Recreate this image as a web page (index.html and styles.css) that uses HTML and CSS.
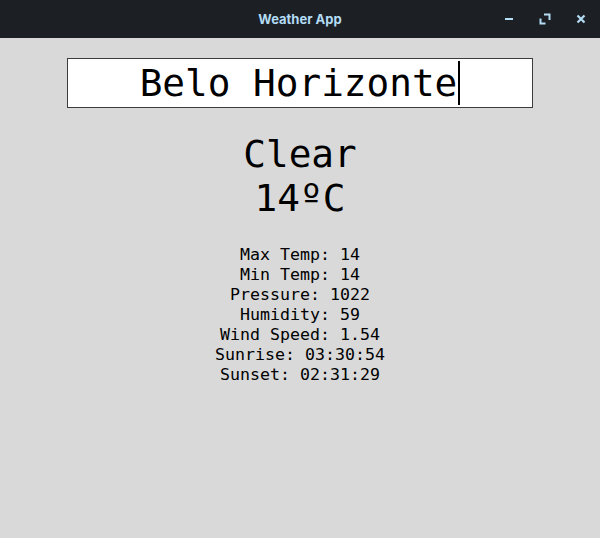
FILE: index.html
```html
<!DOCTYPE html>
<html>
<head>
<meta charset="utf-8">
<title>Weather App</title>
<link rel="stylesheet" href="styles.css">
</head>
<body>
<div class="window">
  <header class="titlebar">
    <div class="spacer"></div>
    <div class="title">Weather App</div>
    <div class="controls">
      <span class="ctl"><svg width="24" height="24" viewBox="0 0 24 24"><rect x="8" y="11" width="8" height="2" fill="#b3dcf5"/></svg></span>
      <span class="ctl"><svg width="24" height="24" viewBox="0 0 24 24"><path d="M11 7.5h5.5v5.5M7.5 11.5v5h5" fill="none" stroke="#b3dcf5" stroke-width="2"/></svg></span>
      <span class="ctl"><svg width="24" height="24" viewBox="0 0 24 24"><path d="M8.5 8.5l7 7M15.5 8.5l-7 7" fill="none" stroke="#b3dcf5" stroke-width="2.2"/></svg></span>
    </div>
  </header>
  <main class="content">
    <div class="search"><span class="search-text">Belo Horizonte</span><span class="caret"></span></div>
    <div class="condition">Clear</div>
    <div class="temp">14ºC</div>
    <div class="details">
      <div>Max Temp: 14</div>
      <div>Min Temp: 14</div>
      <div>Pressure: 1022</div>
      <div>Humidity: 59</div>
      <div>Wind Speed: 1.54</div>
      <div>Sunrise: 03:30:54</div>
      <div>Sunset: 02:31:29</div>
    </div>
  </main>
</div>
</body>
</html>
```

FILE: styles.css
```css
html, body {
  margin: 0;
  padding: 0;
  background: #d9d9d9;
}
.window {
  width: 600px;
  height: 538px;
  display: flex;
  flex-direction: column;
  overflow: hidden;
}
.titlebar {
  height: 38px;
  flex: none;
  background: #1c2024;
  display: grid;
  grid-template-columns: 1fr auto 1fr;
  align-items: center;
}
.title {
  font-family: Inter, "Noto Sans", sans-serif;
  font-weight: 700;
  font-size: 13px;
  color: #b3dcf5;
  padding-top: 0px;
}
.controls {
  display: flex;
  justify-content: flex-end;
  gap: 12px;
  padding-right: 7px;
}
.ctl {
  width: 24px;
  height: 24px;
  display: block;
}
.ctl svg {
  display: block;
}
.content {
  display: flex;
  flex-direction: column;
  align-items: center;
  font-family: "DejaVu Sans Mono", monospace;
  color: #000;
}
.search {
  margin-top: 20px;
  width: 464px;
  height: 48px;
  border: 1px solid #3c3c3c;
  background: #fff;
  display: flex;
  justify-content: center;
  align-items: center;
  font-size: 37.7px;
  line-height: 48px;
}
.caret {
  display: block;
  width: 2px;
  height: 44px;
  background: #000;
  margin-left: 1px;
}
.condition, .temp {
  font-size: 37.7px;
  line-height: 44px;
}
.condition {
  margin-top: 24px;
}
.details {
  margin-top: 25px;
  font-size: 16.6px;
  line-height: 20px;
  text-align: center;
}
```
